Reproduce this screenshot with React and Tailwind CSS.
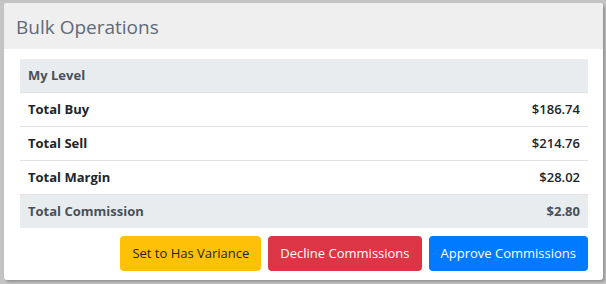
import React from 'react';

const rows = [
  { label: 'Total Buy', value: '$186.74' },
  { label: 'Total Sell', value: '$214.76' },
  { label: 'Total Margin', value: '$28.02' },
];

const App = () => {
  return (
    <div className="w-[606px] h-[284px] bg-[#c4c4c4] pt-[3px] pl-[4px] overflow-hidden" style={{ fontFamily: '"Open Sans", "Noto Sans", sans-serif' }}>
      <div className="w-[599px] h-[277px] bg-white rounded-[3px] shadow-[2px_2px_3px_rgba(0,0,0,0.25)] overflow-hidden flex flex-col">
        {/* Header */}
        <div className="h-[46px] bg-[#efefef] flex items-center px-3 pt-[2px]">
          <h1 className="text-[19px] font-medium text-[#5f6a78] leading-none">Bulk Operations</h1>
        </div>

        {/* Body */}
        <div className="pt-[10px] pl-4 pr-[15px]">
          <table className="w-full text-[13px] border-collapse">
            <tbody>
              <tr className="bg-[#e9ecef] h-[33px] border-b border-[#dee2e6]">
                <td className="px-2 pt-[1px] font-bold text-[#495057]" colSpan={2}>My Level</td>
              </tr>
              {rows.map(r => (
                <tr key={r.label} className="h-[34px] border-b border-[#dee2e6]">
                  <td className="px-2 pt-[1px] font-bold text-[#212529]">{r.label}</td>
                  <td className="px-2 pt-[1px] text-right font-semibold text-[#212529]">{r.value}</td>
                </tr>
              ))}
              <tr className="bg-[#e9ecef] h-[34px]">
                <td className="px-2 pt-[1px] font-bold text-[#495057]">Total Commission</td>
                <td className="px-2 pt-[1px] text-right font-bold text-[#495057]">$2.80</td>
              </tr>
            </tbody>
          </table>

          <div className="flex justify-end gap-[7px] mt-[8px]">
            <button className="h-[35px] px-3 rounded-[4px] bg-[#ffc107] text-[#212529] text-[13px]">Set to Has Variance</button>
            <button className="h-[35px] px-3 rounded-[4px] bg-[#dc3545] text-white text-[13px]">Decline Commissions</button>
            <button className="h-[35px] px-3 rounded-[4px] bg-[#007bff] text-white text-[13px]">Approve Commissions</button>
          </div>
        </div>
      </div>
    </div>
  );
};

export default App;
